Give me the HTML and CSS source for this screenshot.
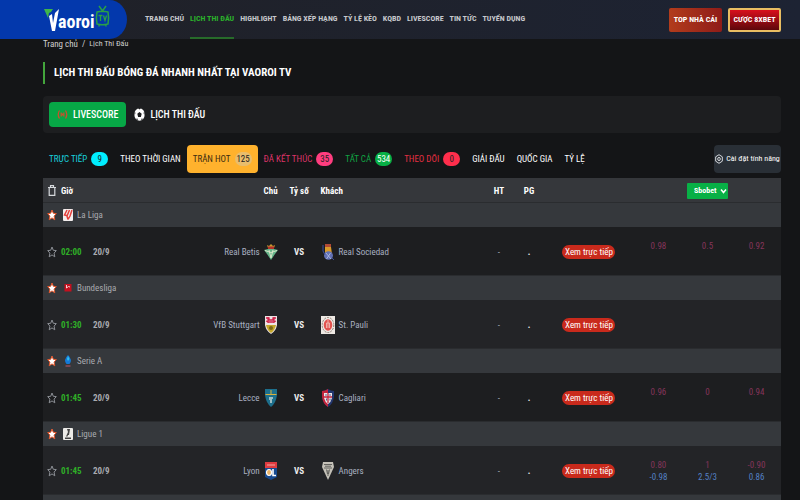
FILE: index.html
```html
<!doctype html>
<html lang="vi">
  <head>
    <meta charset="UTF-8" />
    <meta name="viewport" content="width=device-width, initial-scale=1.0" />
    <title>Lịch Thi Đấu - Vaoroi TV</title>
    <link rel="stylesheet" href="styles.css">
  </head>
  <body>
    <svg class="sprite" aria-hidden="true">
      <symbol id="star" viewBox="0 0 10 12" preserveAspectRatio="none">
        <path d="M5 1l1.300 3.300 3 .3-2.200 2.500.7 3.700L5 8.900l-2.800 1.900.7-3.700L.7 4.600l3-.3z" />
      </symbol>
    </svg>

    <header class="site-header">
      <a class="logo" href="#" aria-label="Vaoroi TV">
        <svg class="logo-mark" viewBox="0 0 16 24">
          <path fill="#3fb54a" d="M0 1h9L7 4l-2 1-1 5z" />
          <path fill="#fff" d="M5 8l3-2 1 9 2-10 4-4-4 22H8z" />
        </svg>
        <span class="logo-text">aoroi</span>
        <svg class="logo-tv" viewBox="0 0 15 22">
          <g fill="none" stroke="#2aa045">
            <path stroke-width="1.500" d="M4 1l3.500 5L11 1M2 7q5.500-1.500 11 0 1.200 6 0 12-5.500 1.500-11 0-1.200-6 0-12zM4 20v1.500M11 20v1.500" />
            <path stroke-width="1.300" d="M3.500 10.500h4M5.500 10.500V16M8.500 10.500l1.500 5 1.500-5" />
          </g>
        </svg>
      </a>
      <nav class="main-nav">
        <a href="#">TRANG CHỦ</a>
        <a class="active" href="#">LỊCH THI ĐẤU</a>
        <a href="#">HIGHLIGHT</a>
        <a href="#">BẢNG XẾP HẠNG</a>
        <a href="#">TỶ LỆ KÈO</a>
        <a href="#">KQBD</a>
        <a href="#">LIVESCORE</a>
        <a href="#">TIN TỨC</a>
        <a href="#">TUYỂN DỤNG</a>
      </nav>
      <div class="header-actions">
        <a class="btn-top" href="#">TOP NHÀ CÁI</a>
        <a class="btn-bet" href="#">CƯỢC 8XBET</a>
      </div>
    </header>

    <main class="container">
      <div class="breadcrumb">
        <a href="#">Trang chủ</a>
        <span>/</span>
        <span class="current">Lịch Thi Đấu</span>
      </div>

      <h1 class="page-title">LỊCH THI ĐẤU BÓNG ĐÁ NHANH NHẤT TẠI VAOROI TV</h1>

      <div class="switcher">
        <button class="switch-btn active">
          <svg viewBox="0 0 11 13" fill="none" stroke="#c9502c" stroke-width="1.300">
            <path d="M2.500 2.500Q0 6.500 2.500 10.500M8.500 2.500Q11 6.500 8.500 10.500" />
            <path d="M4.200 4.500v4M6.800 4.500v4" />
            <path d="M5.500 5.500v2" />
          </svg>
          LIVESCORE
        </button>
        <button class="switch-btn">
          <svg viewBox="0 0 11 13">
            <ellipse cx="5.500" cy="6.500" rx="5.200" ry="6.200" fill="#fff" />
            <path fill="#1d1e20" d="M5.500 4l2.200 1.800-.8 3.200H4.100l-.8-3.200zM4 0h3L5.500 1.400zM.5 4l1 .8L.7 7.500zM10.500 4l-1 .8.8 2.700zM2.300 11.500l.7-1.500 1 2zM8.700 11.500L8 10l-1 2z" />
          </svg>
          LỊCH THI ĐẤU
        </button>
      </div>

      <div class="filters">
        <button class="filter live">TRỰC TIẾP <span class="count">9</span></button>
        <button class="filter">THEO THỜI GIAN</button>
        <button class="filter hot">TRẬN HOT <span class="count">125</span></button>
        <button class="filter finished">ĐÃ KẾT THÚC <span class="count">35</span></button>
        <button class="filter all">TẤT CẢ <span class="count">534</span></button>
        <button class="filter followed">THEO DÕI <span class="count">0</span></button>
        <button class="filter">GIẢI ĐẤU</button>
        <button class="filter">QUỐC GIA</button>
        <button class="filter">TỶ LỆ</button>
        <button class="settings">
          <svg viewBox="0 0 8 10" fill="none" stroke="#d5d8dc">
            <path d="M4 .7l3.300 2.100v4.400L4 9.300.7 7.200V2.800z" />
            <ellipse cx="4" cy="5" rx="1.300" ry="1.600" />
          </svg>
          Cài đặt tính năng
        </button>
      </div>

      <table class="fixtures">
        <colgroup>
          <col class="c-star"><col class="c-time"><col class="c-date"><col class="c-home"><col class="c-score"><col>
          <col class="c-stat"><col class="c-stat"><col class="c-live"><col class="c-odds"><col class="c-odds"><col class="c-odds">
        </colgroup>
        <thead>
          <tr>
            <th>
              <svg class="trash" viewBox="0 0 8 11" fill="none" stroke="#d5d8dc" stroke-width="1.200">
                <path d="M0 2.500h8M2.500 2.500V.7h3v1.800M1.200 2.500v7.800h5.600V2.500" />
              </svg>
            </th>
            <th class="left" colspan="2">Giờ</th>
            <th class="right">Chủ</th>
            <th>Tỷ số</th>
            <th class="left">Khách</th>
            <th>HT</th>
            <th>PG</th>
            <th></th>
            <th colspan="3">
              <span class="bookmaker">
                <select aria-label="Nhà cái">
                  <option>Sbobet</option>
                </select>
                <svg viewBox="0 0 7 6" fill="none" stroke="#fff" stroke-width="1.500"><path d="M1 1.500l2.500 3 2.500-3" /></svg>
              </span>
            </th>
          </tr>
        </thead>
        <tbody>
          <tr class="league">
            <td><svg class="star on"><use href="#star" /></svg></td>
            <td colspan="11">
              <div class="league-name">
                <svg viewBox="0 0 10 12"><rect width="10" height="12" rx="1" fill="#f3eeee" /><path fill="none" stroke="#e5403c" stroke-width="1.500" d="M4 1L1.500 6l2 .5M6.500 1L4 7l1 3.500M9 1L7 7l-2 3.500" /></svg>
                La Liga
              </div>
            </td>
          </tr>
          <tr class="match">
            <td><svg class="star"><use href="#star" /></svg></td>
            <td class="time">02:00</td>
            <td class="date">20/9</td>
            <td>
              <div class="team home">
                Real Betis
                <svg viewBox="0 0 14 18"><path fill="#c9982f" d="M4 5L3 2l2 1 2-2 2 2 2-1-1 3z" /><path fill="#b3322b" d="M4 3.500h6V6H4z" /><path fill="#65b58a" d="M0 7l4-1h6l4 1-3 4-4 6-4-6z" /><path stroke="#d9e6c9" fill="none" d="M1 7.500l6 2 6-2M5 7l2 8 2-8" /></svg>
              </div>
            </td>
            <td class="vs">VS</td>
            <td>
              <div class="team">
                <svg viewBox="0 0 14 18"><path fill="#b04a35" d="M4 1h6v3H4z" /><path fill="#d99b2b" d="M4 4h6l1 7H4z" /><ellipse cx="7.500" cy="12.500" rx="4.500" ry="4.300" fill="#6171b5" /><path d="M5 10l5 6M9.500 10l-4 6" stroke="#b9c2e6" fill="none" stroke-width=".8" /><path stroke="#3a4f9c" d="M2 2v6l2 4M11 15l2 2" fill="none" /></svg>
                Real Sociedad
              </div>
            </td>
            <td>-</td>
            <td class="dot">.</td>
            <td><button class="watch">Xem trực tiếp</button></td>
            <td class="odds"><div>0.98</div><div></div></td>
            <td class="odds"><div>0.5</div><div></div></td>
            <td class="odds"><div>0.92</div><div></div></td>
          </tr>

          <tr class="league">
            <td><svg class="star on"><use href="#star" /></svg></td>
            <td colspan="11">
              <div class="league-name">
                <svg viewBox="0 0 10 12"><path fill="#c5101f" d="M1.500 2h7v7.500h-7z" /><path fill="none" stroke="#fff" stroke-width=".8" d="M3.500 3v3l2-1.500 1.500.5" /></svg>
                Bundesliga
              </div>
            </td>
          </tr>
          <tr class="match alt">
            <td><svg class="star"><use href="#star" /></svg></td>
            <td class="time">01:30</td>
            <td class="date">20/9</td>
            <td>
              <div class="team home">
                VfB Stuttgart
                <svg viewBox="0 0 14 18"><path fill="#eee3e4" d="M1 0h12v9q-1 6-6 9-5-3-6-9z" /><path stroke="#cf2149" stroke-width="1.300" fill="none" d="M2 2h3v2h4V2h3M2 5l3 1h4l3-1M4 1v6M10 1v6" /><path fill="#c3a62a" d="M2 9h10q-1 5-5 8-4-3-5-8z" /><circle cx="7" cy="12" r="2" fill="#7d6716" /></svg>
              </div>
            </td>
            <td class="vs">VS</td>
            <td>
              <div class="team">
                <svg viewBox="0 0 14 18"><path fill="#eee9e4" d="M0 0h14v18H0z" /><ellipse cx="7" cy="9" rx="5.800" ry="7.500" fill="none" stroke="#8d7c72" stroke-dasharray="2 1" /><ellipse cx="7" cy="9" rx="4.300" ry="5.800" fill="#e2534f" /><path stroke="#f2c3bd" stroke-width=".8" d="M5.500 12V7h3v5M7 4v8" fill="none" /></svg>
                St. Pauli
              </div>
            </td>
            <td>-</td>
            <td class="dot">.</td>
            <td><button class="watch">Xem trực tiếp</button></td>
            <td></td>
            <td></td>
            <td></td>
          </tr>

          <tr class="league">
            <td><svg class="star on"><use href="#star" /></svg></td>
            <td colspan="11">
              <div class="league-name">
                <svg viewBox="0 0 10 12"><path fill="#1479d8" d="M5 0q5 5 1.500 9h-3Q0 5 5 0z" /><path fill="#35c2ea" d="M5 1l1.500 3L5 6 4 4z" /><path stroke="#c2556a" d="M2.500 11h5" /></svg>
                Serie A
              </div>
            </td>
          </tr>
          <tr class="match">
            <td><svg class="star"><use href="#star" /></svg></td>
            <td class="time">01:45</td>
            <td class="date">20/9</td>
            <td>
              <div class="team home">
                Lecce
                <svg viewBox="0 0 14 18"><path fill="#1d6f8c" d="M1 0h12v6q-1 8-6 12Q2 14 1 6z" /><path stroke="#d8b13c" d="M1.500 5.500h11M7 1v4" fill="none" /><path fill="#9fbfc4" d="M5 8h4v2H8v4H6v-3H5z" /></svg>
              </div>
            </td>
            <td class="vs">VS</td>
            <td>
              <div class="team">
                <svg viewBox="0 0 14 18"><path fill="#22366e" d="M1 2q3 0 6-2 3 2 6 2v6q-1 7-6 10Q2 15 1 8z" /><path fill="#c3243c" d="M1 2q3 0 6-2v18Q2 15 1 8z" /><path fill="#f0e8e8" d="M3 4h8v5q-1 4-4 6-3-2-4-6z" /><path stroke="#c3243c" stroke-width="1.300" d="M7 4v10M3 8h8" /><path fill="#53618f" d="M4.500 5h1v2h-1zM8.500 5h1v2h-1zM5 9.500h1v2H5zM8.500 9.500h1v2h-1z" /></svg>
                Cagliari
              </div>
            </td>
            <td>-</td>
            <td class="dot">.</td>
            <td><button class="watch">Xem trực tiếp</button></td>
            <td class="odds"><div>0.96</div><div></div></td>
            <td class="odds"><div>0</div><div></div></td>
            <td class="odds"><div>0.94</div><div></div></td>
          </tr>

          <tr class="league">
            <td><svg class="star on"><use href="#star" /></svg></td>
            <td colspan="11">
              <div class="league-name">
                <svg viewBox="0 0 10 12"><rect width="10" height="12" rx="1" fill="#ecebe8" /><path fill="#444" d="M4 1h3L6 7H5l-.5 1.500H3L5 4zM2 9.500h6V11H2z" /></svg>
                Ligue 1
              </div>
            </td>
          </tr>
          <tr class="match alt">
            <td><svg class="star"><use href="#star" /></svg></td>
            <td class="time">01:45</td>
            <td class="date">20/9</td>
            <td>
              <div class="team home">
                Lyon
                <svg viewBox="0 0 14 18"><path fill="#df3b40" d="M1 0h12v6H1z" /><path stroke="#f0a9a0" d="M3 3h8" /><path fill="#174a8f" d="M1 6h12v9l-6 3-6-3z" /><ellipse cx="5" cy="10.500" rx="2.500" ry="3" fill="#e8b267" stroke="#fff" stroke-width="1.200" /><path stroke="#fff" stroke-width="1.600" fill="none" d="M9 7v6.500h3" /></svg>
              </div>
            </td>
            <td class="vs">VS</td>
            <td>
              <div class="team">
                <svg viewBox="0 0 14 18"><path fill="#c4c1b8" d="M2 0h10l1 5-6 13L1 5z" /><path stroke="#4a4a48" stroke-width=".8" fill="none" d="M3 2.500h8M3 6h8M4 4.200h6M7 8v6M5.500 7.500L6.500 12M8.500 7.500L7.500 12" /></svg>
                Angers
              </div>
            </td>
            <td>-</td>
            <td class="dot">.</td>
            <td><button class="watch">Xem trực tiếp</button></td>
            <td class="odds"><div>0.80</div><div class="total">-0.98</div></td>
            <td class="odds"><div>1</div><div class="total">2.5/3</div></td>
            <td class="odds"><div>-0.90</div><div class="total">0.86</div></td>
          </tr>
          <tr class="league">
            <td colspan="12"></td>
          </tr>
        </tbody>
      </table>
    </main>
  </body>
</html>
```
FILE: styles.css
```css
* {
  margin: 0;
  padding: 0;
  box-sizing: border-box;
}

body {
  height: 100vh;
  overflow: hidden;
  background: #141517;
  color: #fff;
  font-family: 'Roboto Condensed', 'Liberation Sans Narrow', Roboto, sans-serif;
  font-size: 9px;
  line-height: 12px;
}

a {
  color: inherit;
  text-decoration: none;
}

button,
select {
  border: none;
  background: none;
  color: inherit;
  font: inherit;
  cursor: pointer;
}

svg {
  flex: none;
}

.sprite {
  display: none;
}

/* Header */
.site-header {
  display: flex;
  align-items: center;
  height: 39px;
  padding-right: 19px;
  background: linear-gradient(90deg, #202127, #1d2333);
}

.logo {
  display: flex;
  align-items: center;
  width: 127px;
  height: 39px;
  padding-left: 44px;
  background: #0338ac;
  border-radius: 0 18px 18px 0 / 0 20px 20px 0;
}

.logo-mark {
  width: 16px;
  height: 24px;
  margin-right: -2px;
}

.logo-text {
  padding-top: 4px;
  font-size: 18px;
  font-weight: 700;
  line-height: 24px;
}

.logo-tv {
  width: 15px;
  height: 22px;
  margin-bottom: 8px;
}

.main-nav {
  display: flex;
  gap: 6px;
  margin-left: 18px;
  color: #c6c8cc;
  font-size: 8px;
  font-weight: 700;
  white-space: nowrap;
}

.main-nav a {
  line-height: 37px;
  border-bottom: 2px solid transparent;
}

.main-nav .active {
  color: #2bb12b;
  border-color: #276b2a;
}

.header-actions {
  display: flex;
  gap: 6px;
  margin-left: auto;
  font-size: 8px;
  font-weight: 700;
  white-space: nowrap;
}

.header-actions a {
  width: 53px;
  height: 24px;
  border-radius: 2px;
  line-height: 24px;
  text-align: center;
}

.header-actions .btn-top {
  background: linear-gradient(90deg, #b23c1c, #8f1c18);
}

.header-actions .btn-bet {
  border: 2px solid #e8bd62;
  background: linear-gradient(#d80f1c, #5d070b);
  line-height: 20px;
}

/* Page head */
.container {
  padding: 0 19px 0 43px;
}

.breadcrumb {
  display: flex;
  gap: 4px;
  height: 12px;
  margin-bottom: 11px;
  color: #d0d0d0;
  line-height: 10px;
}

.breadcrumb .current {
  font-size: 8px;
}

.page-title {
  padding-left: 9px;
  border-left: 2px solid #43a53c;
  font-size: 11px;
  line-height: 22px;
}

.switcher {
  display: flex;
  align-items: center;
  gap: 8px;
  height: 37px;
  margin-top: 12px;
  padding: 0 6px;
  background: #1d1e20;
  border-radius: 4px;
}

.switch-btn {
  display: flex;
  align-items: center;
  gap: 5px;
  height: 25px;
  font-size: 10px;
  font-weight: 500;
}

.switch-btn svg {
  width: 11px;
  height: 13px;
}

.switch-btn.active {
  padding: 0 8px;
  background: #07a746;
  border-radius: 4px;
}

/* Filters */
.filters {
  display: flex;
  align-items: center;
  height: 28px;
  margin: 12px 0 5px;
  white-space: nowrap;
}

.filter {
  display: flex;
  align-items: center;
  gap: 4px;
  height: 28px;
  padding: 0 6px;
}

.count {
  min-width: 17px;
  height: 14px;
  border-radius: 7px;
  color: #222;
  line-height: 14px;
  text-align: center;
}

.live {
  color: #18cfdc;
}

.live .count {
  background: #00eeff;
}

.hot {
  background: #ffb22d;
  border-radius: 4px;
  color: #3c2c10;
}

.hot .count {
  background: #e9bd6c;
}

.finished {
  color: #dc3468;
}

.finished .count {
  background: #ff3d7f;
}

.all {
  color: #10a343;
}

.all .count {
  background: #08b046;
  color: #fff;
}

.followed {
  color: #e52f42;
}

.followed .count {
  background: #ff2e4c;
}

.settings {
  display: flex;
  align-items: center;
  justify-content: center;
  gap: 3px;
  width: 67px;
  height: 28px;
  margin-left: auto;
  background: #292f36;
  border-radius: 4px;
  font-size: 8px;
}

.settings svg {
  width: 8px;
  height: 10px;
}

/* Fixtures */
.fixtures {
  width: 100%;
  table-layout: fixed;
  border-collapse: collapse;
  white-space: nowrap;
}

.c-star {
  width: 18px;
}

.c-time {
  width: 32px;
}

.c-date {
  width: 37px;
}

.c-home {
  width: 20%;
}

.c-score {
  width: 43px;
}

.c-stat {
  width: 30px;
}

.c-live {
  width: 90px;
}

.c-odds {
  width: 49px;
}

.fixtures th,
.fixtures td {
  text-align: center;
  vertical-align: middle;
}

.fixtures .left,
.fixtures .time,
.fixtures .date,
.fixtures .league td {
  text-align: left;
}

.fixtures .right {
  text-align: right;
}

.fixtures thead tr {
  height: 24px;
  background: #35373b;
}

.fixtures th,
.fixtures .match td {
  padding-top: 2px;
}

.bookmaker {
  position: relative;
  display: inline-block;
  height: 16px;
  vertical-align: middle;
}

.bookmaker select {
  display: block;
  width: 41px;
  height: 16px;
  padding-left: 7px;
  appearance: none;
  background: #08b046;
  border-radius: 1px;
  font-size: 8px;
  font-weight: 700;
}

.bookmaker svg {
  position: absolute;
  top: 5px;
  right: 1px;
  width: 7px;
  height: 6px;
  pointer-events: none;
}

.trash {
  display: block;
  width: 8px;
  height: 11px;
  margin-left: 5px;
}

.league {
  height: 25px;
  background: #35383c;
  border-top: 1px solid #2a2c2f;
  color: #a9abb0;
}

.league-name {
  display: flex;
  align-items: center;
  gap: 4px;
  padding-left: 2px;
}

.league-name svg {
  width: 10px;
  height: 12px;
}

.match {
  height: 48px;
  background: #1d1e20;
  color: #a9b0c0;
}

.match.alt {
  background: #232427;
}

.star {
  display: block;
  width: 10px;
  height: 12px;
  margin-left: 4px;
  fill: none;
  stroke: #8b8e94;
  stroke-width: 1;
}

.star.on {
  fill: #fff;
  stroke: #e0552b;
}

.time {
  color: #2fae27;
  font-weight: 700;
}

.date {
  color: #a9abb0;
  font-weight: 700;
}

.team {
  display: flex;
  align-items: center;
  gap: 4px;
}

.team svg {
  width: 14px;
  height: 18px;
}

.team.home {
  justify-content: flex-end;
}

.vs,
.dot {
  color: #eee;
  font-weight: 700;
}

.watch {
  width: 53px;
  height: 14px;
  background: #c92a1c;
  border-radius: 7px;
  color: #fff;
  line-height: 14px;
}

.odds {
  color: #85345a;
}

.odds div {
  height: 12px;
}

.odds .total {
  color: #5380c4;
}
```
